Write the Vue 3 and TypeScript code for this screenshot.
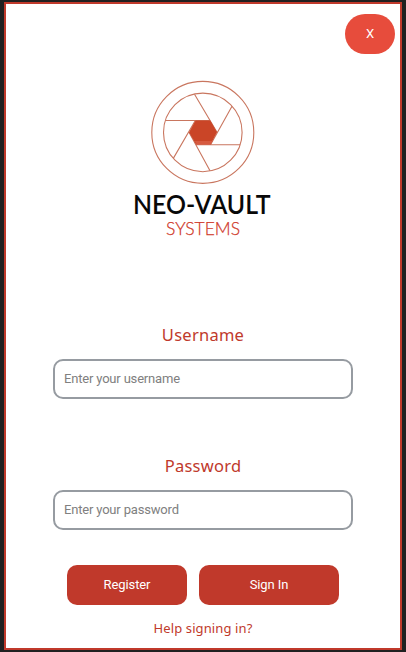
<script setup lang="ts">
import { ref } from 'vue'

interface Field {
  id: string
  label: string
  type: string
  placeholder: string
}

const fields: Field[] = [
  { id: 'username', label: 'Username', type: 'text', placeholder: 'Enter your username' },
  { id: 'password', label: 'Password', type: 'password', placeholder: 'Enter your password' },
]

const values = ref<Record<string, string>>({ username: '', password: '' })
</script>

<template>
  <main class="window">
    <header class="top">
      <button class="close" type="button">X</button>
    </header>
    <svg class="logo" width="150" height="166" viewBox="128 76 150 166">
      <g class="shutter">
        <circle cx="202.8" cy="132.4" r="51" />
        <circle cx="202.8" cy="132.4" r="39.3" />
        <path d="M194.5 94.2L217 132.3M232 106.2L210.7 144.6M165.5 120.5H210M240.2 144.7H196M173.3 158.4L195.3 120.5M210 170.8L189 132.3" />
      </g>
      <path class="core" d="M195.5 120.5H210.3L217 132.3L210.6 144.6H196L189 132.3Z" />
      <path class="core-shade" d="M194.9 141H212.5L210.6 144.6H196.6Z" />
      <text class="name" x="133" y="214" textLength="137.5" lengthAdjust="spacingAndGlyphs">NEO-VAULT</text>
      <text class="sub" x="166" y="235" textLength="74" lengthAdjust="spacingAndGlyphs">SYSTEMS</text>
    </svg>
    <form class="form" @submit.prevent>
      <div v-for="f in fields" :key="f.id" class="field">
        <label :for="f.id">{{ f.label }}</label>
        <input :id="f.id" v-model="values[f.id]" :type="f.type" :placeholder="f.placeholder" />
      </div>
      <div class="actions">
        <button class="register" type="button">Register</button>
        <button class="signin" type="submit">Sign In</button>
      </div>
    </form>
    <a class="help">Help signing in?</a>
  </main>
</template>

<style>
body {
  background: #202020;
}
</style>

<style scoped>
.window {
  box-sizing: border-box;
  width: 398px;
  height: 648px;
  margin: 2px 4px;
  border: 2px solid #c0392b;
  background: #fff;
  display: flex;
  flex-direction: column;
  align-items: center;
}
.top {
  align-self: stretch;
  display: flex;
  justify-content: flex-end;
  padding: 10px 5px 0 0;
}
button {
  height: 40px;
  padding: 0;
  border: 0;
  color: #fff;
  background: #c0392b;
  border-radius: 10px;
  font: 13px/40px Roboto, sans-serif;
  letter-spacing: -0.1px;
}
.close {
  width: 50px;
  border-radius: 20px;
  background: #e74c3c;
}
.logo {
  margin-top: 22px;
  flex: none;
}
.shutter {
  fill: none;
  stroke: #c9765f;
  stroke-width: 1.1;
}
.core {
  fill: #ca4527;
}
.core-shade {
  fill: #d65a40;
}
.name {
  font: 600 26px/1 Lato, sans-serif;
  fill: #080808;
}
.sub {
  font: 300 18px/1 Lato, sans-serif;
  fill: #d03a2b;
  stroke: #d03a2b;
  stroke-width: 0.25;
}
.form {
  width: 300px;
  margin-top: 83px;
}
.field {
  height: 131px;
  display: flex;
  flex-direction: column;
  align-items: center;
}
.field + .field {
  height: 130px;
}
label {
  height: 34px;
  line-height: 20px;
  font-family: "Noto Sans", sans-serif;
  font-size: 16.5px;
  letter-spacing: 0.25px;
  color: #c0392b;
}
input {
  box-sizing: border-box;
  width: 300px;
  height: 40px;
  padding: 0 9px 2px;
  border: 2px solid #969ba1;
  border-radius: 10px;
  background: #fff;
  font: 13px Roboto, sans-serif;
  letter-spacing: -0.18px;
}
input::placeholder {
  color: #808080;
}
.actions {
  display: flex;
  justify-content: center;
  gap: 12px;
  margin-top: -21px;
}
.register {
  width: 120px;
}
.signin {
  width: 140px;
}
.help {
  margin-top: 15px;
  font: 13px/16px "Noto Sans", sans-serif;
  letter-spacing: 0.12px;
  color: #c0392b;
}
</style>
